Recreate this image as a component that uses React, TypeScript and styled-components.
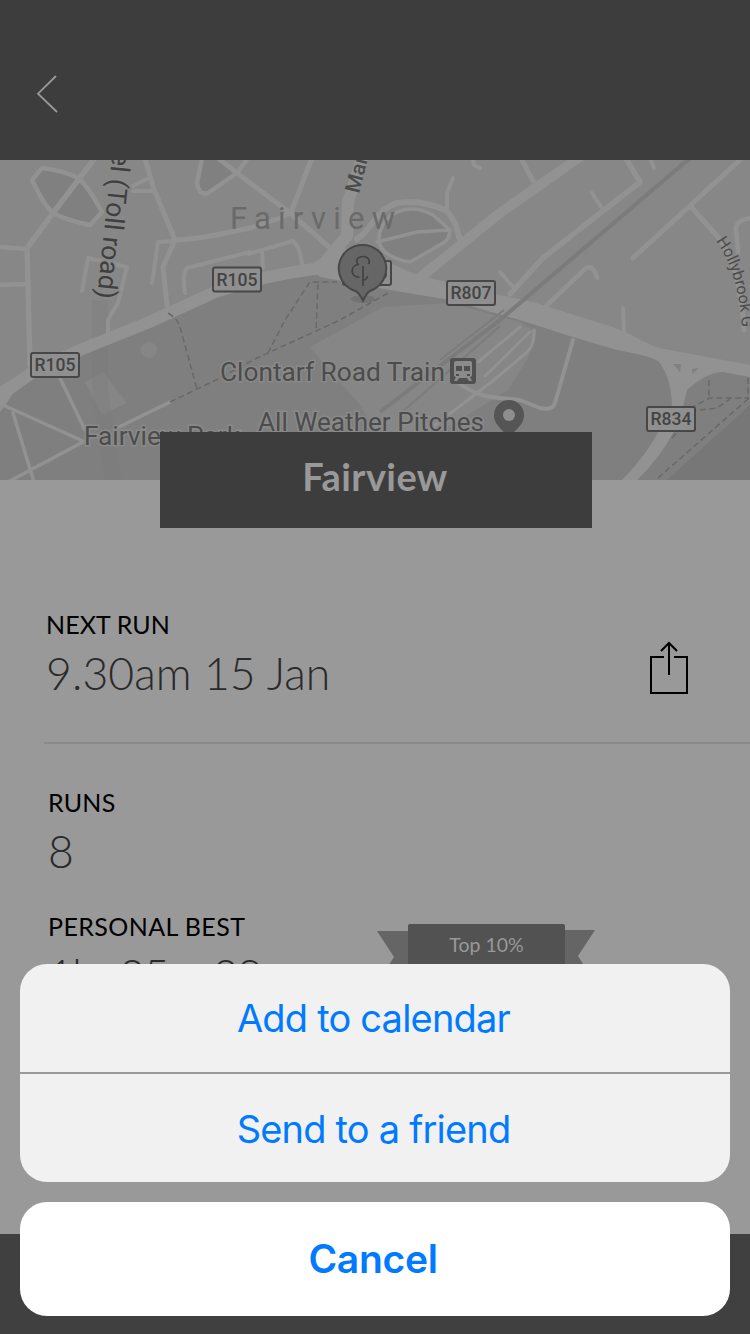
import React from "react";
import styled, { createGlobalStyle } from "styled-components";

const GlobalStyle = createGlobalStyle`
  *, *::before, *::after { box-sizing: border-box; }
  body { margin: 0; background: #999; }
  button { border: 0; margin: 0; padding: 0; background: none; font: inherit; color: inherit; }
`;

const Screen = styled.main`
  position: relative;
  display: flex;
  flex-direction: column;
  width: 750px;
  height: 1334px;
  overflow: hidden;
  background: #999;
  font-family: Lato, "Open Sans", sans-serif;
`;

const Header = styled.header`
  flex: none;
  height: 160px;
  padding: 74px 0 0 34px;
  background: #3d3d3d;
`;

const BackButton = styled.button`
  display: block;
  width: 28px;
  height: 40px;
`;

const Icon = styled.svg`
  display: block;
  overflow: visible;
`;

const MapView = styled.svg`
  display: block;
  flex: none;
  width: 750px;
  height: 320px;
  font-family: Roboto, sans-serif;
`;

const PlaceTitle = styled.h1`
  z-index: 1;
  flex: none;
  width: 432px;
  height: 96px;
  margin: -48px 0 0 160px;
  padding-right: 2px;
  background: #3d3d3d;
  color: #999;
  font-size: 38px;
  font-weight: 700;
  line-height: 89px;
  letter-spacing: 0.4px;
  text-align: center;
`;

const NextRun = styled.section`
  display: flex;
  flex: none;
  justify-content: space-between;
  height: 216px;
  margin-left: 44px;
  padding: 80px 62px 0 2px;
  border-bottom: 2px solid #8a8a8a;
`;

const Stats = styled.section`
  display: flex;
  flex: 1;
  flex-direction: column;
  gap: 30px;
  padding: 42px 62px 0 48px;
`;

const StatRow = styled.div`
  display: flex;
  height: 94px;
`;

const StatText = styled.div<{ $width?: number }>`
  display: flex;
  flex-direction: column;
  width: ${(p) => (p.$width ? `${p.$width}px` : "auto")};
`;

const Label = styled.span<{ $spacing?: number }>`
  color: #000;
  font-size: 25px;
  line-height: 33px;
  letter-spacing: ${(p) => p.$spacing ?? 0}px;
  white-space: nowrap;
`;

const Value = styled.span<{ $spacing?: number }>`
  color: #2a2a2a;
  font-size: 44.5px;
  font-weight: 300;
  line-height: 64px;
  letter-spacing: ${(p) => p.$spacing ?? 0}px;
  white-space: nowrap;
`;

const ShareButton = styled.button`
  width: 38px;
  height: 54px;
  margin-top: 33px;
`;

const Ribbon = styled.div`
  position: relative;
  width: 218px;
  height: 60px;
  margin-top: 14px;
`;

const RibbonTails = styled(Icon)`
  position: absolute;
  inset: 0;
`;

const RibbonLabel = styled.div`
  position: relative;
  width: 157px;
  height: 52px;
  margin-left: 31px;
  border-radius: 2px;
  background: #525252;
  color: #999;
  font-size: 19.5px;
  line-height: 42px;
  text-align: center;
`;

const TabBar = styled.footer`
  flex: none;
  height: 100px;
  background: #404040;
`;

const ActionSheet = styled.div`
  position: absolute;
  z-index: 2;
  right: 20px;
  bottom: 18px;
  left: 20px;
  display: flex;
  flex-direction: column;
  gap: 20px;
  color: #007aff;
  font-family: Inter, sans-serif;
`;

const ActionGroup = styled.div`
  display: flex;
  flex-direction: column;
  gap: 2px;
  overflow: hidden;
  border-radius: 27px;
  background: #999;
`;

const Action = styled.button<{ $lineHeight: number }>`
  height: 108px;
  padding-right: 3px;
  background: #f1f1f1;
  font-size: 38px;
  line-height: ${(p) => p.$lineHeight}px;
  letter-spacing: -0.8px;
`;

const CancelAction = styled.button`
  height: 114px;
  padding-right: 4px;
  border-radius: 27px;
  background: #fff;
  font-size: 39px;
  font-weight: 600;
  line-height: 114px;
  letter-spacing: -0.3px;
`;

type RoadProps = { d: string; w?: number };
const Road = ({ d, w = 4.5 }: RoadProps) => (
  <path d={d} fill="none" stroke="#929292" strokeWidth={w} strokeLinecap="round" strokeLinejoin="round" />
);

const Trail = ({ d }: { d: string }) => (
  <path d={d} fill="none" stroke="#686868" strokeWidth="1.5" strokeDasharray="6 3.5" />
);

const RouteBadge = ({ x, y, name }: { x: number; y: number; name: string }) => (
  <g>
    <rect x={x} y={y} width="48" height="24" rx="2" fill="#8f8f8f" stroke="#474747" strokeWidth="2" />
    <text x={x + 3.5} y={y + 18} fontSize="18.5" fontWeight="500" fill="#444" textLength="41" lengthAdjust="spacingAndGlyphs">
      {name}
    </text>
  </g>
);

type MapLabelProps = { x: number; y: number; size: number; width: number; children: string };
const MapLabel = ({ x, y, size, width, children }: MapLabelProps) => (
  <text x={x} y={y} fontSize={size} textLength={width} lengthAdjust="spacingAndGlyphs" fill="#4c4c4c" stroke="#8a8a8a" strokeWidth="3" paintOrder="stroke">
    {children}
  </text>
);

const FairviewMap = () => (
  <MapView viewBox="0 160 750 320">
    <rect y="160" width="750" height="320" fill="#878787" />

    {/* green areas */}
    <path d="M0 400L33 376L80 354L147 328L215 298L250 284L310 274L390 288L450 300L520 320L573 337L650 357L750 377V480H0Z" fill="#7f7f7f" />
    <path d="M42 168L78 178L102 212L90 225L53 213L32 180Z M202 160L197 183L202 194H208L237 173L220 160Z" fill="#808080" />
    <path d="M380 240L383 223L397 212L413 209L433 215L450 230L443 243L410 262L383 252Z" fill="#808080" />
    <path d="M310 347L383 307L450 303L520 322L536 332L528 358L508 390L440 432H376L360 405Z" fill="#868686" />
    <path d="M85 382L103 372L127 403L102 415Z M141 350a8 8 0 1 0 16 0a8 8 0 1 0-16 0" fill="#868686" />
    <path d="M667 480L750 405V480Z" fill="#777" />
    <path d="M92 300H108V390L122 480H104L92 390Z" fill="#7b7b7b" opacity=".3" />

    {/* north west streets */}
    <Road d="M42 168C60 170 70 174 78 178C90 188 96 202 102 212L90 225C76 222 63 219 53 213C42 203 38 191 32 180Z" />
    <Road d="M95 158L53 213L27 248L30 365" w={5.5} />
    <Road d="M0 247L27 249M0 285L27 284" />
    <Road d="M145 158L153 187L175 240L163 267L167 305" w={5} />
    <Road d="M175 240C200 239 222 234 250 228L280 218L292 212" w={5} />
    <Road d="M133 186L151 177M133 191H155M175 241L158 242L152 283" w={4} />
    <Road d="M82 291L88 258L127 267L118 303L108 320V332" w={4} />
    <Road d="M250 252L187 268Q182 274 185 293" w={4} />
    <Road d="M202 158L197 183Q199 196 208 193L237 173L248 158" />
    <Road d="M218 158L237 173L290 213L328 246M312 158L292 210" w={5} />
    <Road d="M248 254L293 241Q300 247 302 264M262 250L263 268" w={4} />

    {/* oval green and north east streets */}
    <Road d="M357 239C374 228 374 211 397 203C415 200 430 203 445 210C454 217 457 228 460 240" w={6} />
    <Road d="M380 245C376 232 385 217 397 212C412 206 424 210 433 215L450 230Q449 241 443 243L410 262Q386 258 380 245M377 242L417 232L450 230" w={3.5} />
    <Road d="M453 178L447 193V208M473 160L474 165L480 168" w={4} />
    <Road d="M417 280L500 213L580 157" w={10} />
    <Road d="M521 158L533 181" w={5} />
    <Road d="M625 157L640 182L543 258L510 294" w={5.5} />
    <Road d="M592 193L603 210M650 158L654 168M500 272L513 287M623 308L624 332" w={4} />
    <Road d="M742 158L633 258M692 208L718 237Q740 266 744 330" w={5} />
    <Road d="M752 218Q737 219 736 228L738 252M545 307L585 269Q593 263 597 278" w={4.5} />

    {/* main road */}
    <Road d="M-5 399L33 372L80 350L147 323L167 314L215 292L250 281Q288 272 330 267" w={12} />
    <path d="M0 386L33 368L40 374L14 392Q8 402 0 412Z" fill="#929292" />
    <Road d="M363 156L348 202L347 236L326 261" w={12} />
    <path d="M310 265L340 247L370 254L417 275L500 295L533 302L613 327L632 335Q650 347 670 350L750 365V377L723 372Q707 372 687 390L683 407L673 433Q660 458 637 480H622Q653 449 672 405Q671 376 658 361Q650 356 617 350L573 337L520 320L450 300L390 290L320 277Z" fill="#929292" />
    <path d="M673 364H681L680 372ZM692 369L699 368L692 374Z" fill="#808080" />

    {/* railway */}
    <path d="M690 158L500 320L380 412" fill="none" stroke="#7b7b7b" strokeWidth="4" />
    <path d="M500 326L400 414M504 310L440 360" fill="none" stroke="#7c7c7c" strokeWidth="2" />
    <Road d="M520 327L478 362M530 332L485 376M534 330Q535 346 526 353L494 380L418 438" w={3} />
    <Road d="M455 380Q475 397 500 398L520 400L540 408Q552 411 555 403L573 340" w={4} />

    {/* park paths */}
    <Road d="M3 405L83 441M60 378L85 430M13 413L34 482M8 482L83 442M117 428L170 402" w={3.5} />
    <Trail d="M168 313Q178 319 180 327L197 389" />
    <Trail d="M170 402L218 379L257 358L340 320L390 292" />
    <Trail d="M268 353L285 320L310 282H337M318 284L316 331" />
    <Trail d="M658 478L748 399M690 408L710 398H748M700 410L717 408L730 399M709 380V398M748 378V400M672 438L682 427" />

    {/* labels */}
    <text transform="translate(97 298) rotate(96)" textAnchor="end" fontSize="26.500" fill="#3f3f3f" stroke="#898989" strokeWidth="3" paintOrder="stroke">
      el (Toll road)
    </text>
    <text transform="translate(359 194) rotate(-76)" fontSize="21" fontWeight="500" fill="#4b4b4b">
      Mar
    </text>
    <path id="hollybrook" d="M716 241Q741 275 743 345V400" fill="none" />
    <text fontSize="16" fill="#4c4c4c">
      <textPath href="#hollybrook">Hollybrook G</textPath>
    </text>
    <text x="230" y="229" fontSize="31" fill="#6a6a6a" textLength="165" lengthAdjust="spacing">
      Fairview
    </text>
    <MapLabel x={220} y={381} size={25.5} width={225}>Clontarf Road Train</MapLabel>
    <MapLabel x={258} y={431} size={25.5} width={226}>All Weather Pitches</MapLabel>
    <MapLabel x={84} y={445} size={25.5} width={156}>Fairview Park</MapLabel>

    <RouteBadge x={213} y={267.5} name="R105" />
    <RouteBadge x={31} y={353} name="R105" />
    <RouteBadge x={447} y={281} name="R807" />
    <RouteBadge x={647} y={407} name="R834" />
    <RouteBadge x={343} y={261} name="R105" />

    {/* station */}
    <rect x="450" y="358" width="26" height="26" rx="3" fill="#505050" />
    <path d="M456 361H470Q472 361 472 363V375Q472 377 470 377L472 381H469L467 378H459L457 381H454L456 377Q454 377 454 375V363Q454 361 456 361Z" fill="#8b8b8b" />
    <path d="M456 366H462V371H456ZM464 366H470V371H464ZM456 374H459V376H456ZM467 374H470V376H467Z" fill="#505050" />

    {/* sports ground */}
    <path d="M509 400A15 15 0 0 1 524 415C524 427 512 430 509 441C506 430 494 427 494 415A15 15 0 0 1 509 400Z" fill="#555" />
    <circle cx="509" cy="415" r="6" fill="#8e8e8e" />

    {/* selected park */}
    <ellipse cx="363" cy="299" rx="12" ry="4" fill="#555" opacity=".3" />
    <path d="M362.500 245A23.500 23.500 0 0 1 371 290.500Q367 292 363 300.500Q359 292 354 290.500A23.500 23.500 0 0 1 362.500 245Z" fill="#666" stroke="#484848" strokeWidth="2" />
    <path d="M363 266V286M363 280Q367 280 367.500 276M359.500 277C350.500 278 349.500 266 358 264.500C354.500 259 359 256.500 363 256.500C368.500 256.500 370.500 261 368.500 264" fill="none" stroke="#424242" strokeWidth="1.7" />
  </MapView>
);

export default function App() {
  return (
    <Screen>
      <GlobalStyle />
      <Header>
        <BackButton aria-label="Back">
          <Icon width="28" height="40" viewBox="0 0 28 40" fill="none" stroke="#999" strokeWidth="1.8">
            <path d="M22 2L4 19.700L23 38" />
          </Icon>
        </BackButton>
      </Header>
      <FairviewMap />
      <PlaceTitle>Fairview</PlaceTitle>
      <NextRun>
        <StatText>
          <Label $spacing={0.1}>NEXT RUN</Label>
          <Value $spacing={0.1}>9.30am 15 Jan</Value>
        </StatText>
        <ShareButton aria-label="Share">
          <Icon width="38" height="54" viewBox="0 0 38 54" fill="none" stroke="#000" strokeWidth="2">
            <path d="M14 16H1V52H37V16H24M19 34V2M11 10L19 2L27 10" />
          </Icon>
        </ShareButton>
      </NextRun>
      <Stats>
        <StatRow>
          <StatText>
            <Label $spacing={0.2}>RUNS</Label>
            <Value>8</Value>
          </StatText>
        </StatRow>
        <StatRow>
          <StatText $width={329}>
            <Label $spacing={0.4}>PERSONAL BEST</Label>
            <Value $spacing={-1.5}>1hr 25m 28s</Value>
          </StatText>
          <Ribbon>
            <RibbonTails width="218" height="60" viewBox="0 0 218 60">
              <path d="M0 7H40V59H0L17 33ZM218 6H178V59H218L201 32Z" fill="#656565" />
            </RibbonTails>
            <RibbonLabel>Top 10%</RibbonLabel>
          </Ribbon>
        </StatRow>
      </Stats>
      <TabBar />
      <ActionSheet>
        <ActionGroup>
          <Action $lineHeight={107}>Add to calendar</Action>
          <Action $lineHeight={111}>Send to a friend</Action>
        </ActionGroup>
        <CancelAction>Cancel</CancelAction>
      </ActionSheet>
    </Screen>
  );
}
